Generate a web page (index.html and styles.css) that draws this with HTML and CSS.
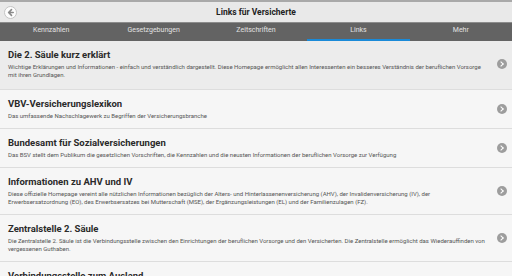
FILE: index.html
```html
<!DOCTYPE html>
<html lang="de">
<head>
    <meta charset="UTF-8">
    <title>Links für Versicherte</title>
    <link rel="stylesheet" href="styles.css">
</head>
<body>
    <div class="top">
        <button class="back">
            <svg width="13" height="13" viewBox="0 0 13 13">
                <circle cx="6.5" cy="6.5" r="6" fill="#fdfdfd" stroke="#c4c4c4" stroke-width="1"/>
                <path d="M7.5 3.6 L4.6 6.5 L7.5 9.4 M4.8 6.5 H9.2" fill="none" stroke="#8a8a8a" stroke-width="1.6" stroke-linecap="round" stroke-linejoin="round"/>
            </svg>
        </button>
        <b class="page-title">Links für Versicherte</b>
    </div>

    <div class="tabs">
        <div class="tab">Kennzahlen</div>
        <div class="tab">Gesetzgebungen</div>
        <div class="tab">Zeitschriften</div>
        <div class="tab active">Links</div>
        <div class="tab">Mehr</div>
    </div>

    <div class="list">
        <div class="item pressed">
            <div class="text">
                <div class="title">Die 2. Säule kurz erklärt</div>
                <div class="desc">Wichtige Erklärungen und Informationen - einfach und verständlich dargestellt. Diese Homepage ermöglicht allen Interessenten ein besseres Verständnis der beruflichen Vorsorge<br>mit ihren Grundlagen.</div>
            </div>
            <span class="arrow"></span>
        </div>
        <div class="item">
            <div class="text">
                <div class="title">VBV-Versicherungslexikon</div>
                <div class="desc">Das umfassende Nachschlagewerk zu Begriffen der Versicherungsbranche</div>
            </div>
            <span class="arrow"></span>
        </div>
        <div class="item">
            <div class="text">
                <div class="title">Bundesamt für Sozialversicherungen</div>
                <div class="desc">Das BSV stellt dem Publikum die gesetzlichen Vorschriften, die Kennzahlen und die neusten Informationen der beruflichen Vorsorge zur Verfügung</div>
            </div>
            <span class="arrow"></span>
        </div>
        <div class="item">
            <div class="text">
                <div class="title">Informationen zu AHV und IV</div>
                <div class="desc">Diese offizielle Homepage vereint alle nützlichen Informationen bezüglich der Alters- und Hinterlassenenversicherung (AHV), der Invalidenversicherung (IV), der<br>Erwerbsersatzordnung (EO), des Erwerbsersatzes bei Mutterschaft (MSE), der Ergänzungsleistungen (EL) und der Familienzulagen (FZ).</div>
            </div>
            <span class="arrow"></span>
        </div>
        <div class="item">
            <div class="text">
                <div class="title">Zentralstelle 2. Säule</div>
                <div class="desc">Die Zentralstelle 2. Säule ist die Verbindungsstelle zwischen den Einrichtungen der beruflichen Vorsorge und den Versicherten. Die Zentralstelle ermöglicht das Wiederauffinden von<br>vergessenen Guthaben.</div>
            </div>
            <span class="arrow"></span>
        </div>
        <div class="item">
            <div class="text">
                <div class="title">Verbindungsstelle zum Ausland</div>
                <div class="desc">Die Verbindungsstelle informiert über die Koordination der beruflichen Vorsorge mit dem Ausland.</div>
            </div>
            <span class="arrow"></span>
        </div>
    </div>
</body>
</html>
```

FILE: styles.css
```css
body {
    margin: 0;
    width: 512px;
    height: 276px;
    overflow: hidden;
    background-color: #f6f6f6;
    font-family: Roboto, "Liberation Sans", sans-serif;
}

.top {
    height: 20px;
    border-top: 2px solid #a9a9a9;
    background-color: #e9e9e9;
    display: flex;
    align-items: center;
    justify-content: center;
    position: relative;
}

.back {
    position: absolute;
    left: 3px;
    top: 3px;
    width: 15px;
    height: 15px;
    padding: 0;
    border: none;
    background: none;
    display: flex;
    align-items: center;
    justify-content: center;
}

.page-title {
    font-size: 8.5px;
    color: #222;
}

.tabs {
    height: 18px;
    background-color: #636363;
    border-top: 1px solid #8c8c8c;
    display: flex;
}

.tab {
    flex: 1;
    color: #e2e2e2;
    font-size: 7px;
    text-align: center;
    line-height: 15px;
    box-sizing: border-box;
}

.tab.active {
    border-bottom: 2.5px solid #1a8ad8;
}

.item {
    display: flex;
    align-items: center;
    padding: 8px 5px 8px 8px;
    border-bottom: 1px solid #dddddd;
}

.item.pressed {
    background-color: #ececec;
    padding-bottom: 10px;
}

.text {
    flex: 1;
}

.title {
    font-size: 9.5px;
    font-weight: bold;
    color: #2a2a2a;
    line-height: 12px;
    margin-bottom: 2px;
}

.desc {
    font-size: 6px;
    color: #555;
    line-height: 8px;
    padding-right: 2px;
}

.arrow {
    width: 10px;
    height: 10px;
    border-radius: 50%;
    background-color: #9d9d9d;
    position: relative;
    flex-shrink: 0;
}

.arrow::after {
    content: "";
    position: absolute;
    left: 2.3px;
    top: 3px;
    width: 3px;
    height: 3px;
    border-top: 1.4px solid #fff;
    border-right: 1.4px solid #fff;
    transform: rotate(45deg);
}
```
